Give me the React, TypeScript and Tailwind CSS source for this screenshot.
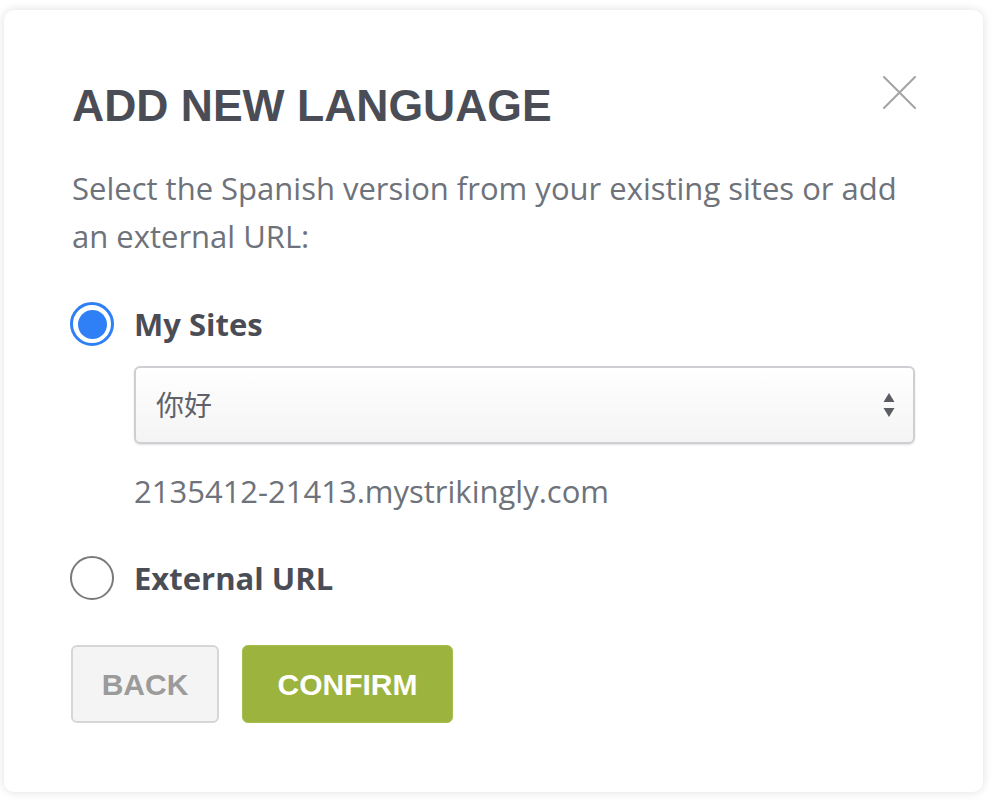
import { useState } from 'react';

const heading = { fontFamily: '"Liberation Sans", Arial, sans-serif' };
const body = { fontFamily: '"Open Sans", "Noto Sans CJK SC", sans-serif' };

function Radio({ checked }: { checked: boolean }) {
  if (checked) {
    return (
      <span className="-ml-[2px] flex h-[44px] w-[44px] shrink-0 items-center justify-center rounded-full border-[3px] border-[#2f80f7] bg-white">
        <span className="h-[29px] w-[29px] rounded-full bg-[#2f80f7]" />
      </span>
    );
  }
  return <span className="-ml-[2px] h-[44px] w-[44px] shrink-0 rounded-full border-2 border-[#7a7a7a] bg-white" />;
}

export default function App() {
  const [mode, setMode] = useState<'sites' | 'url'>('sites');

  return (
    <div className="min-h-screen bg-white pl-[4px] pt-[10px]">
      <div className="relative flex h-[782px] w-[979px] flex-col rounded-[10px] bg-white px-[68px] pt-[74px] shadow-[0_0_10px_rgba(0,0,0,0.13)]">
        {/* Close */}
        <button className="absolute right-[67px] top-[66px] h-[33px] w-[33px]" aria-label="close">
          <svg viewBox="0 0 33 33" className="h-[33px] w-[33px]" fill="none" stroke="#a3a3a6" strokeWidth="2" strokeLinecap="round">
            <path d="M1 1 L32 32 M32 1 L1 32" />
          </svg>
        </button>

        {/* Title */}
        <h1 style={heading} className="text-[44.5px] font-bold leading-[44px] text-[#4a4d56]">
          ADD NEW LANGUAGE
        </h1>

        {/* Description */}
        <p style={body} className="mt-[36px] text-[31px] leading-[48px] text-[#6e727a]">
          Select the Spanish version from your existing sites or add an external URL:
        </p>

        {/* My Sites */}
        <button onClick={() => setMode('sites')} className="mt-[42px] flex items-center gap-[20px] text-left">
          <Radio checked={mode === 'sites'} />
          <span style={body} className="text-[31px] font-bold leading-[44px] text-[#4a4d56]">
            My Sites
          </span>
        </button>

        <div className="ml-[62px] mt-[20px] flex h-[78px] items-center justify-between rounded-[6px] border-2 border-[#cfcfd3] bg-gradient-to-b from-white to-[#f4f4f4] pl-[20px] pr-[18px] shadow-[0_1px_2px_rgba(0,0,0,0.12)]">
          <span style={body} className="text-[28px] text-[#5f6269]">
            你好
          </span>
          <svg width="12" height="28" viewBox="0 0 12 28" fill="#5b5d63">
            <path d="M6 2 L11.5 11 L0.5 11 Z" />
            <path d="M0.5 17 L11.5 17 L6 26 Z" />
          </svg>
        </div>

        <p style={body} className="ml-[62px] mt-[27px] text-[31px] leading-[40px] text-[#6e727a]">
          2135412-21413.mystrikingly.com
        </p>

        {/* External URL */}
        <button onClick={() => setMode('url')} className="mt-[45px] flex items-center gap-[20px] text-left">
          <Radio checked={mode === 'url'} />
          <span style={body} className="text-[31px] font-bold leading-[44px] text-[#4a4d56]">
            External URL
          </span>
        </button>

        {/* Actions */}
        <div className="-ml-[1px] mt-[45px] flex gap-[23px]">
          <button
            style={heading}
            className="h-[78px] w-[148px] rounded-[6px] border-2 border-[#d6d6d6] bg-[#f4f4f4] text-[30px] font-bold text-[#9b9b9b]"
          >
            BACK
          </button>
          <button
            style={heading}
            className="h-[78px] w-[211px] rounded-[6px] border border-[#a7bd4c] bg-[#9cb43e] text-[30px] font-bold text-white"
          >
            CONFIRM
          </button>
        </div>
      </div>
    </div>
  );
}
